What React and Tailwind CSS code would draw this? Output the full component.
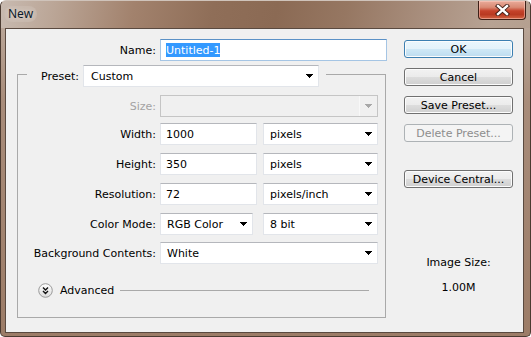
import React from "react";

function Arrow({ color = "#000" }) {
  return (
    <svg width="7" height="4" viewBox="0 0 7 4" className="block" shapeRendering="crispEdges">
      <rect x="0" y="0" width="7" height="1" fill={color} />
      <rect x="1" y="1" width="5" height="1" fill={color} />
      <rect x="2" y="2" width="3" height="1" fill={color} />
      <rect x="3" y="3" width="1" height="1" fill={color} />
    </svg>
  );
}

function Field({ w, value }) {
  return (
    <div className={`flex items-center h-[22px] ${w} bg-white border border-[#e2e5ea] border-t-[#b5b7bc] pl-[5px] text-black`}>
      {value}
    </div>
  );
}

function Select({ w, value, pl = "pl-[6px]" }) {
  return (
    <div className={`flex items-center justify-between h-[22px] ${w} bg-white border border-[#e2e5ea] border-t-[#b5b7bc] ${pl} pr-[5px] text-black`}>
      <span>{value}</span>
      <Arrow />
    </div>
  );
}

function Label({ children, gray }) {
  return (
    <div className={`w-[138px] text-right ${gray ? "text-[#a3a3a3]" : "text-black"}`}>{children}</div>
  );
}

function Row({ label, children, gray, mt }) {
  return (
    <div className={`flex items-center ${mt}`}>
      <Label gray={gray}>{label}</Label>
      <div className="flex items-center gap-[6px] ml-[4px]">{children}</div>
    </div>
  );
}

function Btn({ children, def, disabled, mt }) {
  let cls =
    "flex items-center justify-center h-[18px] w-[109px] rounded-[3px] border shadow-[inset_0_0_0_1px_#fcfcfc] ";
  if (disabled) cls += "border-[#adb2b5] bg-[#f4f4f4] text-[#8d8d8d] shadow-none";
  else if (def)
    cls +=
      "border-[#3c7fb1] bg-[linear-gradient(#eaf6fd_0%,#e4f2fa_50%,#cfe8f6_51%,#bcdcef_100%)] shadow-[inset_0_0_0_1px_#a9dff9] text-black";
  else
    cls +=
      "border-[#707070] bg-[linear-gradient(#f2f2f2_0%,#ebebeb_50%,#dddddd_51%,#cfcfcf_100%)] text-black";
  return <div className={`${cls} ${mt}`}>{children}</div>;
}

export default function App() {
  return (
    <div className="w-[531px] h-[337px] overflow-hidden bg-white font-['DejaVu_Sans',sans-serif] text-[11px] leading-none">
      <div className="flex flex-col w-full h-full rounded-t-[6px] rounded-b-[5px] border border-[#4b3b31] border-t-[#cfc3ba] bg-[linear-gradient(180deg,#bfaea1_0%,#a88c7a_30%,#9c7c67_100%)]">
        {/* title bar */}
        <div className="flex justify-between items-start h-[27px] shrink-0 bg-[linear-gradient(100deg,#c8bab0_0%,#bba697_10%,#a2826d_25%,#8f6e58_40%,#8b6a54_52%,#967762_65%,#a98f7e_80%,#b7a293_92%,#b5a090_100%)] rounded-t-[5px]">
          <div className="ml-[3px] mt-[5px] px-[4px] py-[2px] rounded-full bg-[#cdbfb6]/50 font-['Noto_Sans',sans-serif] text-[12px] text-[#0b1a2a] [text-shadow:0_0_4px_#e8e0da]">
            New
          </div>
          <div className="mr-[4px] w-[48px] h-[19px] rounded-b-[4px] border border-t-0 border-[#3e2017] bg-[linear-gradient(#e9ab9a_0%,#d98a74_35%,#c5422a_55%,#b93a22_75%,#d46544_100%)] shadow-[inset_0_0_0_1px_rgba(255,210,200,0.5)] flex items-center justify-center">
            <svg width="15" height="12" viewBox="0 0 15 12">
              <path d="M3 2 L12 10 M12 2 L3 10" stroke="#3b1a12" strokeWidth="4.2" strokeLinecap="square" />
              <path d="M3 2 L12 10 M12 2 L3 10" stroke="#ffffff" strokeWidth="2.4" strokeLinecap="square" />
            </svg>
          </div>
        </div>

        {/* client area */}
        <div className="ml-[4px] mr-[6px] mb-[3px] h-[305px] border border-[#5a4a40] bg-[#f0f0f0] flex">
          {/* left column */}
          <div className="w-[381px] flex flex-col">
            <div className="flex items-center mt-[10px]">
              <div className="w-[150px] text-right text-black">Name:</div>
              <div className="ml-[4px] flex items-center h-[22px] w-[227px] bg-white border border-[#a5c5e4] border-t-[#5b91c6] pl-[5px]">
                <span className="bg-[#3399ff] text-white h-[14px] flex items-center">Untitled-1</span>
              </div>
            </div>

            <fieldset className="ml-[11px] w-[369px] border border-[#a9a9a9] pb-[19px]">
              <legend className="ml-[9px] pt-[4px]">
                <div className="flex items-center">
                  <div className="w-[52px] text-right text-black">Preset:</div>
                  <div className="ml-[4px] mr-[7px]">
                    <Select w="w-[236px]" value="Custom" pl="pl-[7px]" />
                  </div>
                </div>
              </legend>

              <div className="flex items-center mt-[8px]">
                <Label gray>Size:</Label>
                <div className="ml-[4px] flex items-center justify-end h-[22px] w-[218px] bg-[#f0f0f0] border border-[#c5c5c5]">
                  <div className="h-full w-[18px] border-l border-[#f8f8f8] flex items-center justify-center">
                    <Arrow color="#a8a8a8" />
                  </div>
                </div>
              </div>

              <Row label="Width:" mt="mt-[6px]">
                <Field w="w-[97px]" value="1000" />
                <Select w="w-[115px]" value="pixels" />
              </Row>
              <Row label="Height:" mt="mt-[8px]">
                <Field w="w-[97px]" value="350" />
                <Select w="w-[115px]" value="pixels" />
              </Row>
              <Row label="Resolution:" mt="mt-[8px]">
                <Field w="w-[97px]" value="72" />
                <Select w="w-[115px]" value="pixels/inch" />
              </Row>
              <Row label="Color Mode:" mt="mt-[8px]">
                <div className="mr-[4px]">
                  <Select w="w-[93px]" value="RGB Color" />
                </div>
                <Select w="w-[115px]" value="8 bit" />
              </Row>
              <Row label="Background Contents:" mt="mt-[7px]">
                <Select w="w-[218px]" value="White" />
              </Row>

              <div className="flex items-center h-[16px] mt-[18px] pl-[20px] pr-[16px]">
                <svg width="15" height="15" viewBox="0 0 15 15" className="block shrink-0">
                  <defs>
                    <linearGradient id="adv" x1="0" y1="0" x2="0" y2="1">
                      <stop offset="0" stopColor="#ffffff" />
                      <stop offset="1" stopColor="#dcdcdc" />
                    </linearGradient>
                  </defs>
                  <circle cx="7.5" cy="7.5" r="6.8" fill="url(#adv)" stroke="#9a9a9a" strokeWidth="1" />
                  <path d="M5 4.5 L7.5 7 L10 4.5 M5 8 L7.5 10.5 L10 8" fill="none" stroke="#111" strokeWidth="1.4" />
                </svg>
                <span className="ml-[7px] text-black">Advanced</span>
                <div className="flex-1 ml-[6px] h-0 border-t border-[#a9a9a9] mt-[1px]" />
              </div>
            </fieldset>
          </div>

          {/* right column */}
          <div className="ml-[17px] w-[109px] flex flex-col pt-[11px]">
            <Btn def>OK</Btn>
            <Btn mt="mt-[10px]">Cancel</Btn>
            <Btn mt="mt-[10px]">Save Preset...</Btn>
            <Btn disabled mt="mt-[10px]">Delete Preset...</Btn>
            <Btn mt="mt-[28px]">Device Central...</Btn>
            <div className="mt-[69px] text-center text-black">Image Size:</div>
            <div className="mt-[14px] text-center text-black">1.00M</div>
          </div>
        </div>
      </div>
    </div>
  );
}
